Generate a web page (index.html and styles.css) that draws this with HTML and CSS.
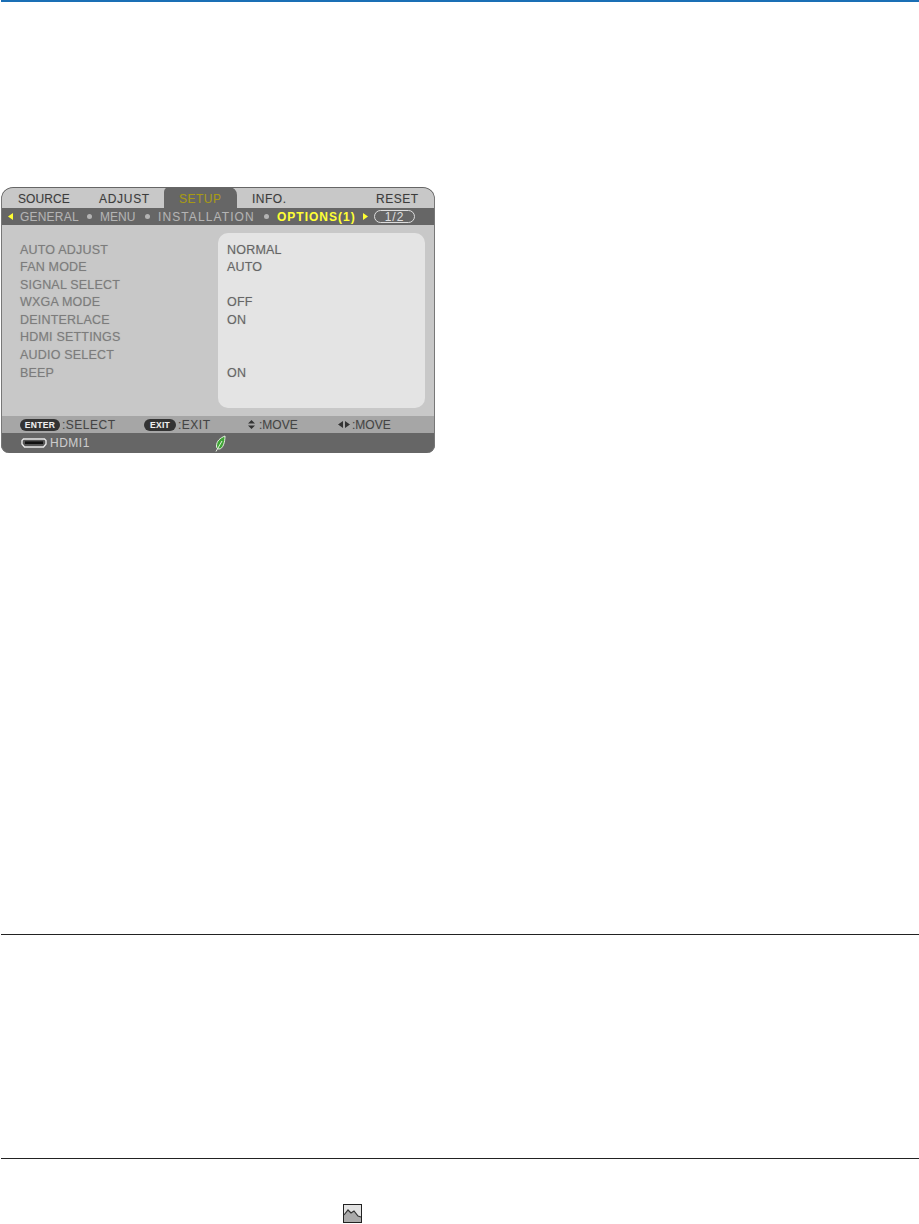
FILE: index.html
```html
<!DOCTYPE html>
<html lang="en">
<head>
  <meta charset="UTF-8" />
  <title>Projector menu</title>
  <link rel="stylesheet" href="styles.css">
</head>
<body>
  <div class="top-rule"></div>

  <section class="osd">
    <div class="tabs">
      <span class="tab tab-source">SOURCE</span>
      <span class="tab tab-adjust">ADJUST</span>
      <span class="tab tab-setup">SETUP</span>
      <span class="tab tab-info">INFO.</span>
      <span class="tab tab-reset">RESET</span>
    </div>

    <div class="subtabs">
      <svg class="arrow" width="5" height="7" viewBox="0 0 5 7"><path d="M5 0V7L0 3.5Z" fill="#ffff33"/></svg>
      <span class="sub sub-general">GENERAL</span>
      <i class="dot"></i>
      <span class="sub sub-menu">MENU</span>
      <i class="dot"></i>
      <span class="sub sub-install">INSTALLATION</span>
      <i class="dot"></i>
      <span class="sub sub-active">OPTIONS(1)</span>
      <svg class="arrow" width="5" height="7" viewBox="0 0 5 7"><path d="M0 0V7L5 3.5Z" fill="#ffff33"/></svg>
      <span class="page-pill">1/2</span>
    </div>

    <div class="body">
      <ul class="labels">
        <li>AUTO ADJUST</li>
        <li>FAN MODE</li>
        <li>SIGNAL SELECT</li>
        <li>WXGA MODE</li>
        <li>DEINTERLACE</li>
        <li>HDMI SETTINGS</li>
        <li>AUDIO SELECT</li>
        <li>BEEP</li>
      </ul>
      <ul class="values">
        <li>NORMAL</li>
        <li>AUTO</li>
        <li></li>
        <li>OFF</li>
        <li>ON</li>
        <li></li>
        <li></li>
        <li>ON</li>
      </ul>
    </div>

    <div class="hints">
      <span class="key key-enter">ENTER</span><span class="hint hint-select">:SELECT</span>
      <span class="key key-exit">EXIT</span><span class="hint hint-exit">:EXIT</span>
      <svg class="icon-ud" width="7" height="9" viewBox="0 0 7 9"><path d="M3.5 0L7 3.6H0ZM3.5 9L0 5.4H7Z" fill="#333"/></svg>
      <span class="hint hint-move-a">:MOVE</span>
      <svg class="icon-lr" width="12" height="7" viewBox="0 0 12 7"><path d="M0 3.5L5 0V7ZM12 3.5L7 0V7Z" fill="#333"/></svg>
      <span class="hint hint-move-b">:MOVE</span>
    </div>

    <div class="status">
      <svg class="hdmi" width="26" height="10" viewBox="0 0 26 10"><path d="M2.5 1H23.5L25 2.5V6L22.5 9H3.5L1 6V2.5Z" fill="#555" stroke="#e8e8e8" stroke-width="1.4"/><rect x="4" y="3.4" width="18" height="2.6" fill="#111"/></svg>
      <span class="input-name">HDMI1</span>
      <svg class="leaf" width="11" height="17" viewBox="0 0 11 17"><path d="M10 1C5 3 1.500 6 1.500 11C1.500 13 2.500 14 4 14C8 14 10 7 10 1Z" fill="#3fa535" stroke="#e6f2e0" stroke-width="1"/><path d="M1 16.500L7 6" stroke="#e6f2e0" stroke-width="1" fill="none"/></svg>
    </div>
  </section>

  <hr class="rule rule-first">
  <hr class="rule rule-second">

  <div class="pic-row">
    <svg width="19" height="19" viewBox="0 0 19 19"><rect x="0.500" y="0.500" width="18" height="18" fill="#e2e2e2" stroke="#222"/><path d="M1 18V11L5 6L8 9L11 7L15 12L18 13V18Z" fill="#aaa"/><path d="M1 11L5 6L8 9L11 7L15 12L18 13" fill="none" stroke="#333" stroke-width="1.200"/></svg>
  </div>
</body>
</html>
```

FILE: styles.css
```css
* {
  box-sizing: border-box;
  margin: 0;
  padding: 0;
}
html {
  background: #fff;
}
body {
  height: 1224px;
  overflow: hidden;
  font-family: "Liberation Sans", Arial, sans-serif;
  background: #fff;
}

.top-rule {
  height: 2px;
  margin-left: 1px;
  background: #1a6fb5;
}

/* OSD menu */
.osd {
  position: relative;
  width: 434px;
  height: 266px;
  margin: 185px 0 0 1px;
  border-radius: 12px 12px 8px 8px;
  overflow: hidden;
  display: flex;
  flex-direction: column;
  background: #c8c8c8;
  font-size: 12px;
  text-shadow: 0 0 1px rgba(128, 128, 128, 0.45);
}
.osd::after {
  content: "";
  position: absolute;
  inset: 0;
  border-radius: inherit;
  box-shadow: inset 0 1px 0 #666, inset 1px 0 0 #777, inset -1px 0 0 #777;
  pointer-events: none;
}

.tabs {
  height: 21px;
  padding-left: 17px;
  display: flex;
  color: #3c3c3c;
  letter-spacing: 0.5px;
}
.tab {
  height: 21px;
  line-height: 24px;
}
.tab-source { width: 81px; letter-spacing: 0.1px; }
.tab-adjust { width: 65px; letter-spacing: 0.7px; }
.tab-setup {
  width: 73px;
  padding-left: 15px;
  background: #666;
  color: #a89a10;
  border-radius: 5px 8px 0 0;
}
.tab-info { width: 124px; margin-left: 15px; }

.subtabs {
  height: 17px;
  display: flex;
  align-items: center;
  background: #666;
  color: #b4b4b4;
  padding-left: 7px;
}
.sub-general { width: 67px; margin-left: 7px; letter-spacing: 0.2px; }
.sub-menu { width: 45px; }
.sub-install { width: 106px; letter-spacing: 1.1px; }
.dot {
  width: 5px;
  height: 5px;
  margin-right: 8px;
  border-radius: 50%;
  background: #b4b4b4;
}
.sub-active {
  width: 86px;
  color: #ffff33;
  font-weight: 700;
  letter-spacing: 1px;
}
.page-pill {
  width: 41px;
  height: 13px;
  margin-left: 6px;
  border: 1px solid #ddd;
  border-radius: 7px;
  color: #ddd;
  text-align: center;
  line-height: 12px;
  letter-spacing: 1px;
}

.body {
  height: 191px;
  padding: 8px 10px 8px 19px;
  display: flex;
  font-size: 12.5px;
  letter-spacing: 0.2px;
}
.labels, .values {
  list-style: none;
}
.labels li, .values li {
  height: 17.6px;
  line-height: 17.6px;
}
.labels {
  width: 198px;
  padding-top: 8.5px;
  color: #7c7c7c;
}
.values {
  flex: 1;
  padding: 8.5px 0 0 9px;
  background: #e4e4e4;
  border-radius: 10px;
  color: #666;
}

.hints {
  height: 17px;
  display: flex;
  align-items: center;
  background: #a6a6a6;
  padding-left: 19px;
  color: #444;
  letter-spacing: 0.5px;
}
.key {
  height: 12px;
  border-radius: 6px;
  background: #333;
  color: #eee;
  font-size: 8.5px;
  font-weight: 700;
  letter-spacing: 0.3px;
  line-height: 12px;
  text-align: center;
}
.key-enter { width: 40px; }
.key-exit { width: 32px; }
.hint-select { width: 82px; margin-left: 2px; }
.hint-exit { width: 70px; margin-left: 2px; }
.hint-move-a { width: 79px; margin-left: 4px; letter-spacing: 0; }
.hint-move-b { margin-left: 2px; letter-spacing: 0; }

.status {
  height: 20px;
  display: flex;
  align-items: center;
  background: #666;
  color: #ccc;
  padding-left: 20px;
  letter-spacing: 0.5px;
}
.input-name {
  margin-left: 3px;
  width: 165px;
}

/* Page rules */
.rule {
  height: 1px;
  border: 0;
  background: #222;
  margin-left: 1px;
}
.rule-first { margin-top: 481px; }
.rule-second { margin-top: 223px; }

.pic-row {
  margin: 45px 0 0 343px;
  line-height: 0;
}
```
